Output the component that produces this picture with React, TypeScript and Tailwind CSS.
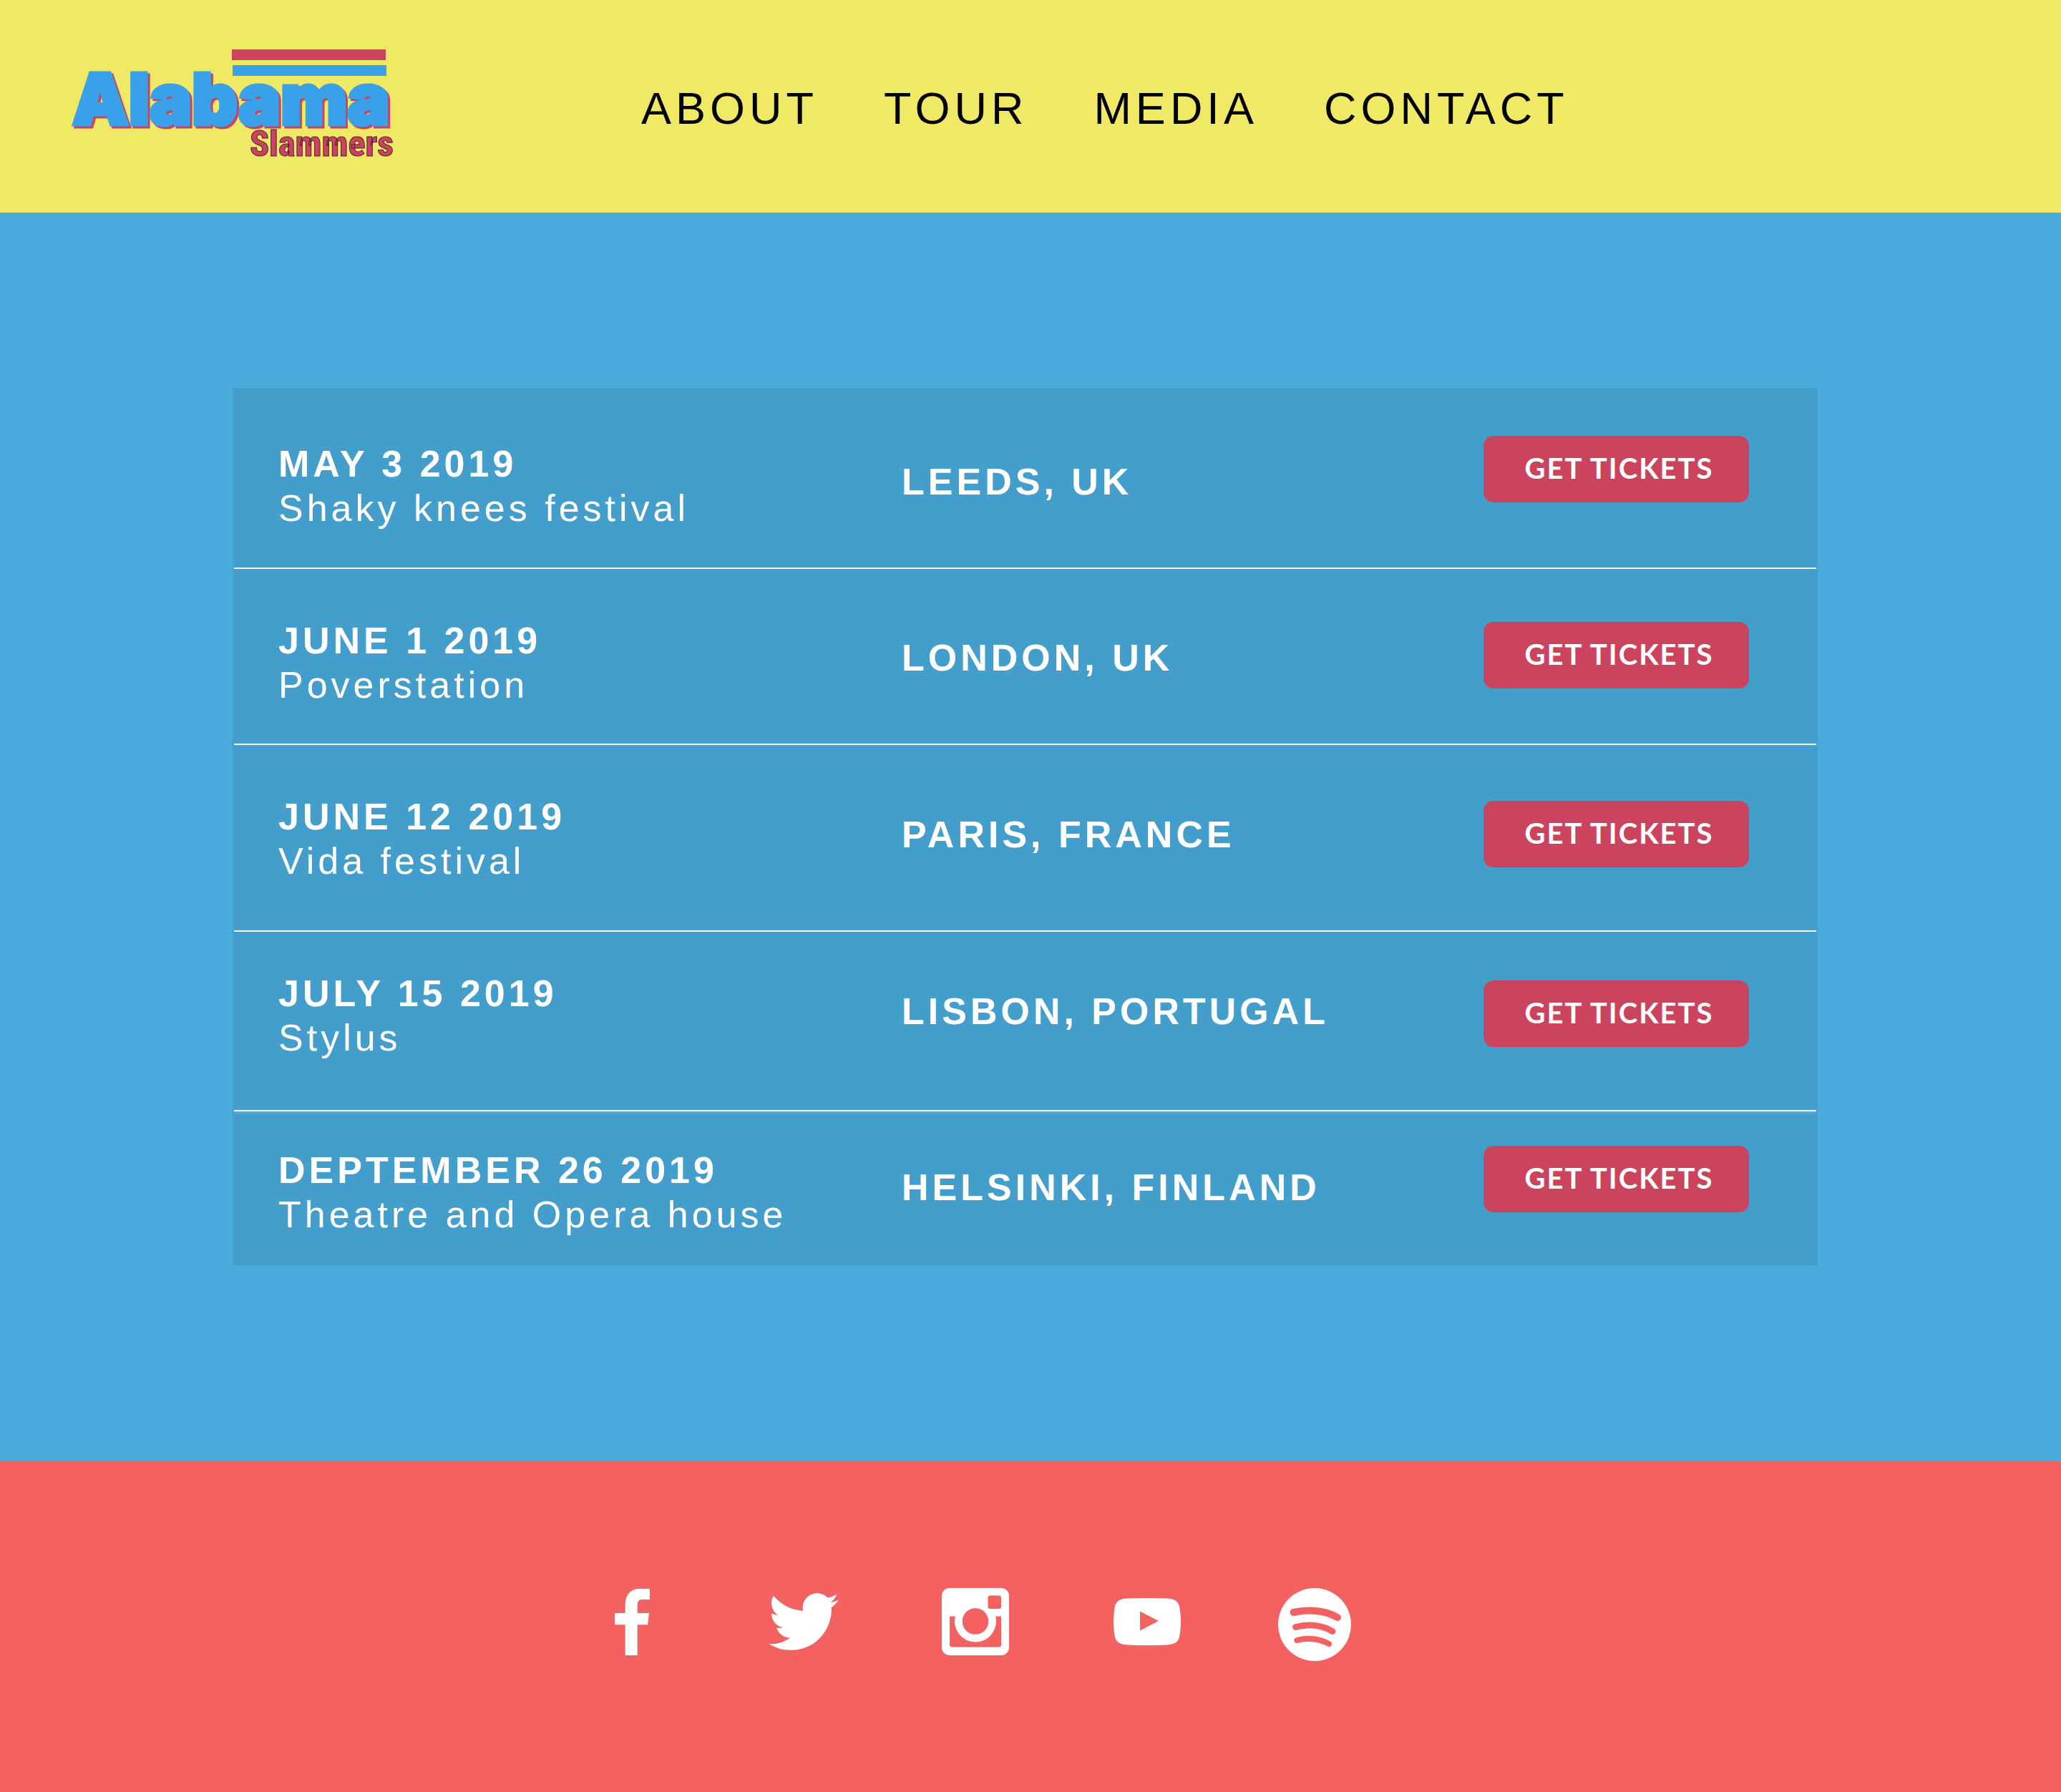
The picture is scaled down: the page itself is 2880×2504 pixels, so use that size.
import React from "react";
import { FaTwitter } from "react-icons/fa";

type Show = {
  date: string;
  venue: string;
  place: string;
  row: string;
  text: string;
  city: string;
  action: string;
};

const navItems = ["ABOUT", "TOUR", "MEDIA", "CONTACT"];

const shows: Show[] = [
  {
    date: "MAY 3 2019",
    venue: "Shaky knees festival",
    place: "LEEDS, UK",
    row: "h-[253px] *:border-b-2 *:border-white",
    text: "pt-[75px]",
    city: "pt-[100px]",
    action: "pt-[67px]",
  },
  {
    date: "JUNE 1 2019",
    venue: "Poverstation",
    place: "LONDON, UK",
    row: "h-[246px] *:border-b-2 *:border-white",
    text: "pt-[69px]",
    city: "pt-[93px]",
    action: "pt-[74px]",
  },
  {
    date: "JUNE 12 2019",
    venue: "Vida festival",
    place: "PARIS, FRANCE",
    row: "h-[261px] *:border-b-2 *:border-white",
    text: "pt-[69px]",
    city: "pt-[94px]",
    action: "pt-[78px]",
  },
  {
    date: "JULY 15 2019",
    venue: "Stylus",
    place: "LISBON, PORTUGAL",
    row: "h-[251px] *:border-b-2 *:border-white",
    text: "pt-[55px]",
    city: "pt-[80px]",
    action: "pt-[68px]",
  },
  {
    date: "DEPTEMBER 26 2019",
    venue: "Theatre and Opera house",
    place: "HELSINKI, FINLAND",
    row: "h-[215px] *:border-t-3 *:border-[#4aabdd]",
    text: "pt-[48px]",
    city: "pt-[72px]",
    action: "pt-[45px]",
  },
];

function Logo() {
  return (
    <svg viewBox="0 0 456 167" className="h-[167px] w-[456px] shrink-0" role="img" aria-label="Alabama Slammers">
      <rect x="224" y="0" width="215" height="15" fill="#cb435c" />
      <rect x="225" y="22" width="215" height="15" fill="#38a1ea" />
      <text
        x="1"
        y="105"
        fill="#38a1ea"
        stroke="#38a1ea"
        strokeWidth="5"
        className="font-['Inter'] text-[99px] font-black drop-shadow-[3px_3px_0_#cb435c]"
      >
        Alabama
      </text>
      <text
        x="450"
        y="149"
        textAnchor="end"
        fill="#cb435c"
        stroke="#4a1c33"
        strokeWidth="1"
        className="font-['Roboto_Condensed','Roboto',sans-serif] text-[50px] font-extrabold"
      >
        Slammers
      </text>
    </svg>
  );
}

function FacebookIcon() {
  return (
    <svg viewBox="0 0 49 93" className="h-[93px] w-[49px]" fill="currentColor" aria-hidden="true">
      <path d="M14.7 93V50.3H0V34h14.7V22C14.7 8 23 0 34 0h15v15H39c-5.500 0-7.300 3-7.300 8v11H48l-2 16.300H31.700V93Z" />
    </svg>
  );
}

function InstagramIcon() {
  return (
    <svg viewBox="0 0 94 94" className="size-[94px]" aria-hidden="true">
      <rect width="94" height="94" rx="11" fill="currentColor" />
      <path d="M11 39.500h72V79a3.500 3.500 0 0 1-3.500 3.500h-65A3.500 3.500 0 0 1 11 79Z" fill="#f46161" />
      <circle cx="47" cy="46.500" r="29" fill="currentColor" />
      <circle cx="47" cy="46.500" r="18.300" fill="#f46161" />
      <rect x="64.500" y="10.500" width="18.500" height="18.500" rx="3" fill="#f46161" />
    </svg>
  );
}

function YoutubeIcon() {
  return (
    <svg viewBox="0 0 94 66" className="h-[66px] w-[94px]" aria-hidden="true">
      <path
        d="M20 .6Q47-.6 74 .6C86 1 91 5 92.500 14Q95.500 33 92.500 52C91 61 86 65 74 65.400Q47 66.600 20 65.400C8 65 3 61 1.500 52Q-1.500 33 1.500 14C3 5 8 1 20 .6Z"
        fill="currentColor"
      />
      <path d="M37 18.500 63 32 37 45.500Z" fill="#f46161" />
    </svg>
  );
}

function SpotifyIcon() {
  return (
    <svg viewBox="0 0 102 102" className="mt-2 size-[102px]" aria-hidden="true">
      <circle cx="51" cy="51" r="51" fill="currentColor" />
      <g fill="none" stroke="#f46161" strokeLinecap="round">
        <path d="M21.500 34C42 29.500 65 31 83 41" strokeWidth="10" />
        <path d="M24.500 54.500C42 50 61 51.500 76 60.500" strokeWidth="9" />
        <path d="M26.500 73C41 69 57 70.500 71 78" strokeWidth="8" />
      </g>
    </svg>
  );
}

const socials = [
  { name: "Facebook", icon: <FacebookIcon /> },
  { name: "Twitter", icon: <FaTwitter className="size-[98px]" /> },
  { name: "Instagram", icon: <InstagramIcon /> },
  { name: "YouTube", icon: <YoutubeIcon /> },
  { name: "Spotify", icon: <SpotifyIcon /> },
];

export default function App() {
  return (
    <div className="flex min-h-screen flex-col bg-[#4aabdd] font-['Liberation_Sans',Arial,sans-serif]">
      <header className="flex items-center gap-[340px] bg-[#f0e966] pt-[69px] pb-[61px] pl-[100px]">
        <a href="#home">
          <Logo />
        </a>
        <nav className="flex gap-[92px] pb-1">
          {navItems.map((item) => (
            <a key={item} href="#" className="text-[63px] leading-[72px] tracking-[6px] text-black">
              {item}
            </a>
          ))}
        </nav>
      </header>

      <main className="grow pt-[245px] pr-[340px] pb-[274px] pl-[325px]">
        <div className="bg-[#449ecc] px-0.5">
          <table className="w-full table-fixed border-separate border-spacing-0 text-left text-[52px] leading-[62px] tracking-[5px] text-white">
            <colgroup>
              <col className="w-[42.2%]" />
              <col />
              <col className="w-[26%]" />
            </colgroup>
            <tbody>
              {shows.map((show) => (
                <tr key={show.date} className={show.row}>
                  <th scope="row" className={`pl-[62px] align-top font-normal ${show.text}`}>
                    <div className="font-bold">{show.date}</div>
                    <div>{show.venue}</div>
                  </th>
                  <td className={`align-top font-bold ${show.city}`}>{show.place}</td>
                  <td className={`pr-[94px] text-right align-top ${show.action}`}>
                    <button
                      type="button"
                      className="inline-flex h-[93px] w-[371px] items-center justify-center rounded-[14px] bg-[#cb435c] pb-1 pl-2 align-top font-['Lato'] text-[40px] leading-[48px] font-bold tracking-[2px]"
                    >
                      GET TICKETS
                    </button>
                  </td>
                </tr>
              ))}
            </tbody>
          </table>
        </div>
      </main>

      <footer className="bg-[#f46161] pt-[169px] pb-[183px] pl-[763px] text-white">
        <ul className="grid grid-cols-[repeat(4,240px)_228px]">
          {socials.map((social) => (
            <li key={social.name} className="flex items-center justify-center">
              <a href="#" aria-label={social.name}>
                {social.icon}
              </a>
            </li>
          ))}
        </ul>
      </footer>
    </div>
  );
}
